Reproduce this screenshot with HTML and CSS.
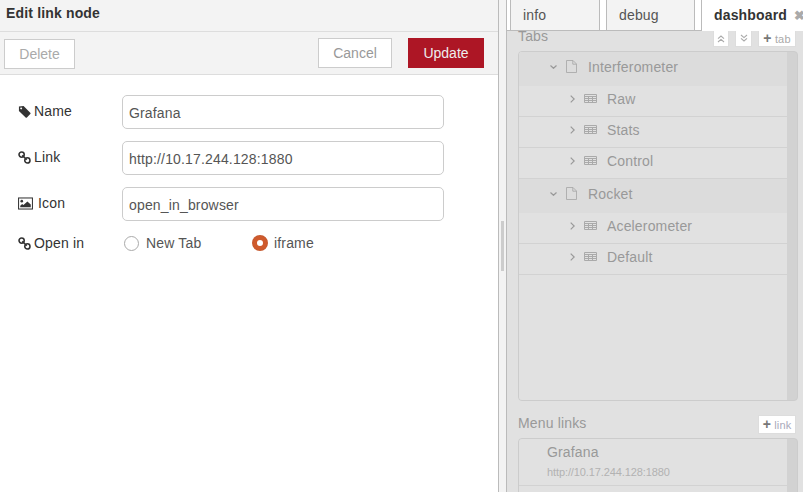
FILE: index.html
```html
<!DOCTYPE html>
<html>
<head>
    <meta charset="UTF-8">
    <title>Edit link node</title>
    <link rel="stylesheet" href="styles.css">
</head>
<body>
    <svg class="defs" width="0" height="0">
        <symbol id="i-tag" viewBox="0 0 14 14">
            <path fill-rule="evenodd" d="M1 1.6 6 1.2 13.2 8.4a1 1 0 0 1 0 1.4L9.6 13.4a1 1 0 0 1-1.4 0L1 6.4ZM3.4 2.6a1 1 0 1 0 .01 0Z"/>
        </symbol>
        <symbol id="i-link" viewBox="0 0 14 14">
            <g fill="none" stroke="currentColor" stroke-width="1.7">
                <circle cx="3.9" cy="3.9" r="2.8"/>
                <circle cx="10.1" cy="10.1" r="2.8"/>
                <path d="M4.6 4.6 9.4 9.4"/>
            </g>
        </symbol>
        <symbol id="i-image" viewBox="0 0 16 13">
            <rect x=".6" y=".6" width="14.8" height="11.8" fill="none" stroke="currentColor" stroke-width="1.1"/>
            <circle cx="4" cy="4" r="1.4"/>
            <path d="M2.4 10.6V8.8L4.4 7 5.8 8.2 10 4.4 13.6 7.6V10.6Z"/>
        </symbol>
        <symbol id="i-file" viewBox="0 0 11 13">
            <path d="M.5.5H7L10.5 4V12.5H.5ZM6.8.7V4.2H10.3" fill="none" stroke="currentColor" stroke-width=".9"/>
        </symbol>
        <symbol id="i-table" viewBox="0 0 13 9">
            <path d="M.5.5H12.5V8.5H.5ZM.5 2.5H12.5M.5 4.5H12.5M.5 6.5H12.5M4.5 2.5V8.5M8.5 2.5V8.5" fill="none" stroke="currentColor"/>
        </symbol>
        <symbol id="i-down" viewBox="0 0 7 4">
            <path d="M.5.5 3.5 3.3 6.5.5" fill="none" stroke="currentColor" stroke-width="1.2"/>
        </symbol>
        <symbol id="i-right" viewBox="0 0 5 8">
            <path d="M.7.6 4.2 4 .7 7.4" fill="none" stroke="currentColor" stroke-width="1.2"/>
        </symbol>
        <symbol id="i-double" viewBox="0 0 8 8">
            <path d="M1 3.6 4 1 7 3.6M1 7 4 4.4 7 7" fill="none" stroke="currentColor" stroke-width="1.1"/>
        </symbol>
    </svg>

    <div class="app">
        <div class="editor">
            <div class="editor-title">Edit link node</div>
            <div class="editor-toolbar">
                <button class="btn btn-delete">Delete</button>
                <div class="toolbar-right">
                    <button class="btn">Cancel</button>
                    <button class="btn btn-primary">Update</button>
                </div>
            </div>
            <div class="form">
                <div class="form-row">
                    <label class="form-label"><svg class="label-icon"><use href="#i-tag"/></svg>Name</label>
                    <input class="form-input" type="text" value="Grafana">
                </div>
                <div class="form-row">
                    <label class="form-label"><svg class="label-icon"><use href="#i-link"/></svg>Link</label>
                    <input class="form-input" type="text" value="http://10.17.244.128:1880">
                </div>
                <div class="form-row">
                    <label class="form-label"><svg class="label-icon image"><use href="#i-image"/></svg>Icon</label>
                    <input class="form-input" type="text" value="open_in_browser">
                </div>
                <div class="form-row radio-row">
                    <label class="form-label"><svg class="label-icon"><use href="#i-link"/></svg>Open in</label>
                    <div class="radio radio-first"><span class="radio-dot"></span>New Tab</div>
                    <div class="radio"><span class="radio-dot checked"></span>iframe</div>
                </div>
            </div>
        </div>

        <div class="splitter"><div class="splitter-handle"></div></div>

        <div class="sidebar">
            <div class="tabs">
                <div class="tab tab-info">info</div>
                <div class="tab tab-debug">debug</div>
                <div class="tab tab-active">dashboard<span class="tab-close">&#10006;</span></div>
            </div>
            <div class="sidebar-body">
                <div class="section-head tabs-head">
                    <span class="section-title">Tabs</span>
                    <div class="section-btns">
                        <span class="mini-btn arrows"><svg class="double"><use href="#i-double"/></svg></span>
                        <span class="mini-btn arrows flip"><svg class="double"><use href="#i-double"/></svg></span>
                        <span class="mini-btn wide"><b>+</b> tab</span>
                    </div>
                </div>
                <div class="tree">
                    <div class="tree-inner">
                        <div class="group">
                            <svg class="caret-down"><use href="#i-down"/></svg>
                            <svg class="file"><use href="#i-file"/></svg>Interferometer
                        </div>
                        <div class="item"><svg class="caret-right"><use href="#i-right"/></svg><svg class="table"><use href="#i-table"/></svg>Raw</div>
                        <div class="item"><svg class="caret-right"><use href="#i-right"/></svg><svg class="table"><use href="#i-table"/></svg>Stats</div>
                        <div class="item"><svg class="caret-right"><use href="#i-right"/></svg><svg class="table"><use href="#i-table"/></svg>Control</div>
                        <div class="group">
                            <svg class="caret-down"><use href="#i-down"/></svg>
                            <svg class="file"><use href="#i-file"/></svg>Rocket
                        </div>
                        <div class="item"><svg class="caret-right"><use href="#i-right"/></svg><svg class="table"><use href="#i-table"/></svg>Acelerometer</div>
                        <div class="item"><svg class="caret-right"><use href="#i-right"/></svg><svg class="table"><use href="#i-table"/></svg>Default</div>
                    </div>
                </div>
                <div class="section-head links-head">
                    <span class="section-title">Menu links</span>
                    <span class="mini-btn wide link-btn"><b>+</b> link</span>
                </div>
                <div class="links">
                    <div class="links-inner">
                        <div class="link-row">
                            <div class="link-name">Grafana</div>
                            <div class="link-url">http://10.17.244.128:1880</div>
                        </div>
                    </div>
                </div>
            </div>
        </div>
    </div>
</body>
</html>
```

FILE: styles.css
```css
html, body {
    margin: 0;
    padding: 0;
    height: 100%;
    overflow: hidden;
    background: #fff;
    font-family: "Liberation Sans", Arial, sans-serif;
    font-size: 14px;
    letter-spacing: .16px;
    color: #333;
}
.defs {
    position: absolute;
}
.app {
    display: flex;
    height: 492px;
}

/* left edit panel */
.editor {
    width: 498px;
    flex: none;
    border-right: 1px solid #bbb;
}
.editor-title {
    height: 31px;
    line-height: 27px;
    padding-left: 6px;
    font-weight: bold;
    background: #f3f3f3;
    border-bottom: 1px solid #ddd;
}
.editor-toolbar {
    height: 42px;
    display: flex;
    justify-content: space-between;
    background: #f3f3f3;
    border-bottom: 1px solid #ddd;
    padding: 0 14px 0 4px;
}
.btn {
    height: 30px;
    width: 74px;
    margin-top: 6px;
    padding: 0;
    border: 1px solid #ccc;
    background: #fff;
    color: #999;
    font-family: inherit;
    font-size: 14px;
}
.btn-delete {
    width: 71px;
    margin-top: 7px;
    color: #aaa;
}
.btn-primary {
    width: 76px;
    margin-left: 16px;
    border: none;
    background: #ad1625;
    color: #eee;
}
.toolbar-right {
    display: flex;
}
.form {
    padding: 20px 0 0 18px;
}
.form-row {
    display: flex;
    align-items: flex-start;
    margin-bottom: 12px;
}
.form-label {
    width: 104px;
    flex: none;
    line-height: 20px;
    padding-top: 6px;
    display: flex;
    align-items: center;
}
.label-icon {
    width: 13px;
    height: 13px;
    margin-right: 3px;
    fill: #333;
    color: #333;
}
.label-icon.image {
    width: 15px;
    margin-right: 5px;
}
.form-input {
    width: 322px;
    height: 34px;
    box-sizing: border-box;
    padding: 4px 6px 2px;
    border: 1px solid #ccc;
    border-radius: 5px;
    font-family: inherit;
    font-size: 14px;
    letter-spacing: .16px;
    color: #555;
    outline: none;
}
.radio-row {
    align-items: center;
}
.radio-row .form-label {
    padding-top: 0;
}
.radio {
    display: flex;
    align-items: center;
    width: 128px;
    color: #555;
    line-height: 20px;
}
.radio-first {
    margin-left: 2px;
}
.radio-dot {
    width: 15px;
    height: 15px;
    box-sizing: border-box;
    border: 1px solid #aaa;
    border-radius: 50%;
    margin-right: 7px;
    background: #fff;
}
.radio-dot.checked {
    border: 4px solid #cf5a2c;
    box-shadow: 0 0 0 1px #c65a30;
    width: 14px;
    height: 14px;
    margin-left: 1px;
}

/* splitter */
.splitter {
    width: 7px;
    flex: none;
    background: #f3f3f3;
    border-right: 1px solid #bbb;
    display: flex;
    align-items: center;
}
.splitter-handle {
    width: 3px;
    height: 50px;
    margin: 0 0 0 2px;
    background: #ccc;
}

/* right sidebar */
.sidebar {
    flex: 1;
    min-width: 0;
    overflow: hidden;
    background: #e1e1e1;
}
.tabs {
    position: relative;
    z-index: 1;
    height: 30px;
    display: flex;
    padding-left: 3px;
    background: #fff;
    border-bottom: 1px solid #bbb;
}
.tab {
    height: 30px;
    box-sizing: border-box;
    line-height: 30px;
    padding-left: 12px;
    background: #f3f3f3;
    border-left: 1px solid #bbb;
    border-right: 1px solid #bbb;
    color: #555;
}
.tab-info {
    flex: none;
    width: 90px;
    margin-right: 6px;
}
.tab-debug {
    flex: none;
    width: 89px;
    margin-right: 6px;
}
.tab-active {
    height: 31px;
    flex: 1;
    min-width: 0;
    overflow: hidden;
    border-right: none;
    background: #fff;
    color: #333;
    font-weight: bold;
    white-space: nowrap;
}
.tab-close {
    margin-left: 7px;
    font-size: 13px;
    color: #aaa;
}
.sidebar-body {
    padding: 0 5px 0 11px;
}
.section-head {
    display: flex;
    justify-content: space-between;
}
.section-title {
    color: #999;
}
.tabs-head {
    height: 23px;
    margin-top: -3px;
    line-height: 16px;
}
.section-btns {
    display: flex;
    margin-top: 2px;
    margin-right: 2px;
}
.mini-btn {
    display: block;
    height: 17px;
    box-sizing: border-box;
    background: #fff;
    border: 1px solid #ddd;
    color: #aaa;
    font-size: 11px;
    line-height: 15px;
    text-align: center;
    margin-left: 6px;
}
.mini-btn b {
    color: #777;
    font-size: 14px;
}
.mini-btn.arrows {
    width: 16px;
    display: flex;
    align-items: center;
    justify-content: center;
    padding-top: 1px;
}
.mini-btn.flip {
    width: 17px;
    transform: scaleY(-1);
}
.double {
    width: 8px;
    height: 8px;
    color: #aaa;
}
.mini-btn.wide {
    width: 38px;
}
.tree {
    height: 350px;
    box-sizing: border-box;
    border: 1px solid #ccc;
    border-radius: 4px;
    padding-right: 10px;
    background: #d2d2d2;
}
.tree-inner {
    background: #e1e1e1;
    height: 100%;
    border-radius: 3px 0 0 3px;
    color: #999;
}
.group {
    height: 34px;
    box-sizing: border-box;
    background: #dcdcdc;
    display: flex;
    align-items: center;
    padding: 0 0 5px 31px;
}
.group:first-child {
    border-radius: 3px 0 0 0;
}
.item {
    height: 31px;
    box-sizing: border-box;
    border-bottom: 1px solid #d2d2d2;
    display: flex;
    align-items: center;
    padding: 0 0 5px 51px;
}
.caret-down {
    width: 7px;
    height: 4px;
    color: #999;
    margin-right: 9px;
}
.file {
    width: 11px;
    height: 13px;
    color: #aaa;
    margin-right: 11px;
}
.caret-right {
    width: 5px;
    height: 8px;
    color: #999;
    margin-right: 9px;
}
.table {
    width: 13px;
    height: 9px;
    color: #aaa;
    margin-right: 10px;
}
.links-head {
    height: 37px;
    align-items: center;
    padding-top: 7px;
    box-sizing: border-box;
}
.link-btn {
    height: 19px;
    line-height: 17px;
    margin: 2px 2px 0 0;
    color: #aab;
}
.links {
    height: 60px;
    box-sizing: border-box;
    border: 1px solid #ccc;
    border-radius: 4px 4px 0 0;
    padding-right: 10px;
    background: #d2d2d2;
}
.links-inner {
    height: 100%;
    background: #e1e1e1;
    border-radius: 3px 0 0 0;
}
.link-row {
    height: 47px;
    box-sizing: border-box;
    border-bottom: 1px solid #d2d2d2;
    padding: 5px 0 0 28px;
}
.link-name {
    color: #999;
    line-height: 17px;
}
.link-url {
    color: #b2b2b2;
    font-size: 11px;
    letter-spacing: -.1px;
    line-height: 13px;
    margin-top: 5px;
}
```
